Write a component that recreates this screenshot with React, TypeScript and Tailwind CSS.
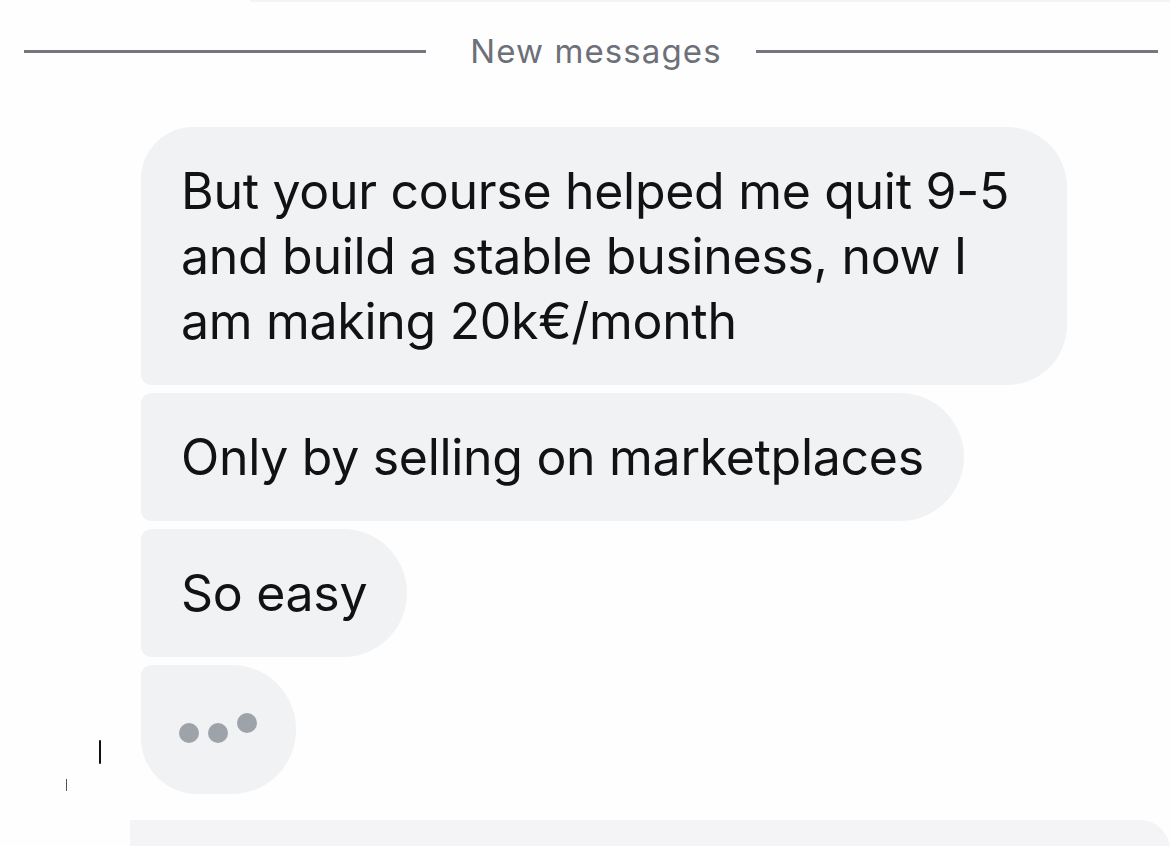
const font = { fontFamily: "Inter, 'Noto Sans', sans-serif" };

function Bubble({ className, children }: { className: string; children: React.ReactNode }) {
  return (
    <div
      className={`whitespace-nowrap bg-[#f1f2f4] pl-[40px] pr-[40px] pt-[32px] pb-[31px] text-[50px] leading-[65px] tracking-[-0.3px] text-[#111214] ${className}`}
    >
      {children}
    </div>
  );
}

export default function App() {
  return (
    <div className="relative h-[846px] w-[1170px] overflow-hidden bg-[#fefefe]" style={font}>
      <div className="ml-[250px] h-[2px] bg-[#f4f4f5]" />

      <div className="flex h-[99px] items-center pl-[24px] pr-[12px]">
        <div className="h-[3px] flex-1 bg-[#74777e]" />
        <span className="ml-[44px] mr-[34px] text-[33px] leading-none tracking-[1.1px] text-[#6d7078]">New messages</span>
        <div className="h-[3px] flex-1 bg-[#74777e]" />
      </div>

      <div className="mt-[26px] flex flex-col items-start gap-[8px] pl-[141px]">
        <Bubble className="w-[926px] rounded-tl-[52px] rounded-tr-[60px] rounded-br-[60px] rounded-bl-[10px]">
          But your course helped me quit 9-5
          <br />
          and build a stable business, now I
          <br />
          am making 20k€/month
        </Bubble>
        <Bubble className="rounded-l-[10px] rounded-r-[64px]">Only by selling on marketplaces</Bubble>
        <Bubble className="rounded-l-[10px] rounded-r-[64px]">So easy</Bubble>

        <div className="relative">
          <div className="flex h-[129px] w-[155px] items-start gap-[9px] rounded-tl-[10px] rounded-bl-[56px] rounded-r-[64px] bg-[#f1f2f4] pl-[38px] pt-[48px]">
            <span className="mt-[10px] h-[20px] w-[20px] rounded-full bg-[#9ea2a9]" />
            <span className="mt-[10px] h-[20px] w-[20px] rounded-full bg-[#9ea2a9]" />
            <span className="h-[20px] w-[20px] rounded-full bg-[#9ea2a9]" />
          </div>
          {/* stray marks left of the typing bubble */}
          <span className="absolute left-[-42px] top-[75px] h-[24px] w-[2px] rounded-full bg-[#111]" />
          <span className="absolute left-[-75px] top-[114px] h-[12px] w-[1px] bg-[#555]" />
        </div>
      </div>

      <div className="ml-[130px] mt-[26px] h-[30px] rounded-tr-[40px] bg-[#f4f4f6]" />
    </div>
  );
}
